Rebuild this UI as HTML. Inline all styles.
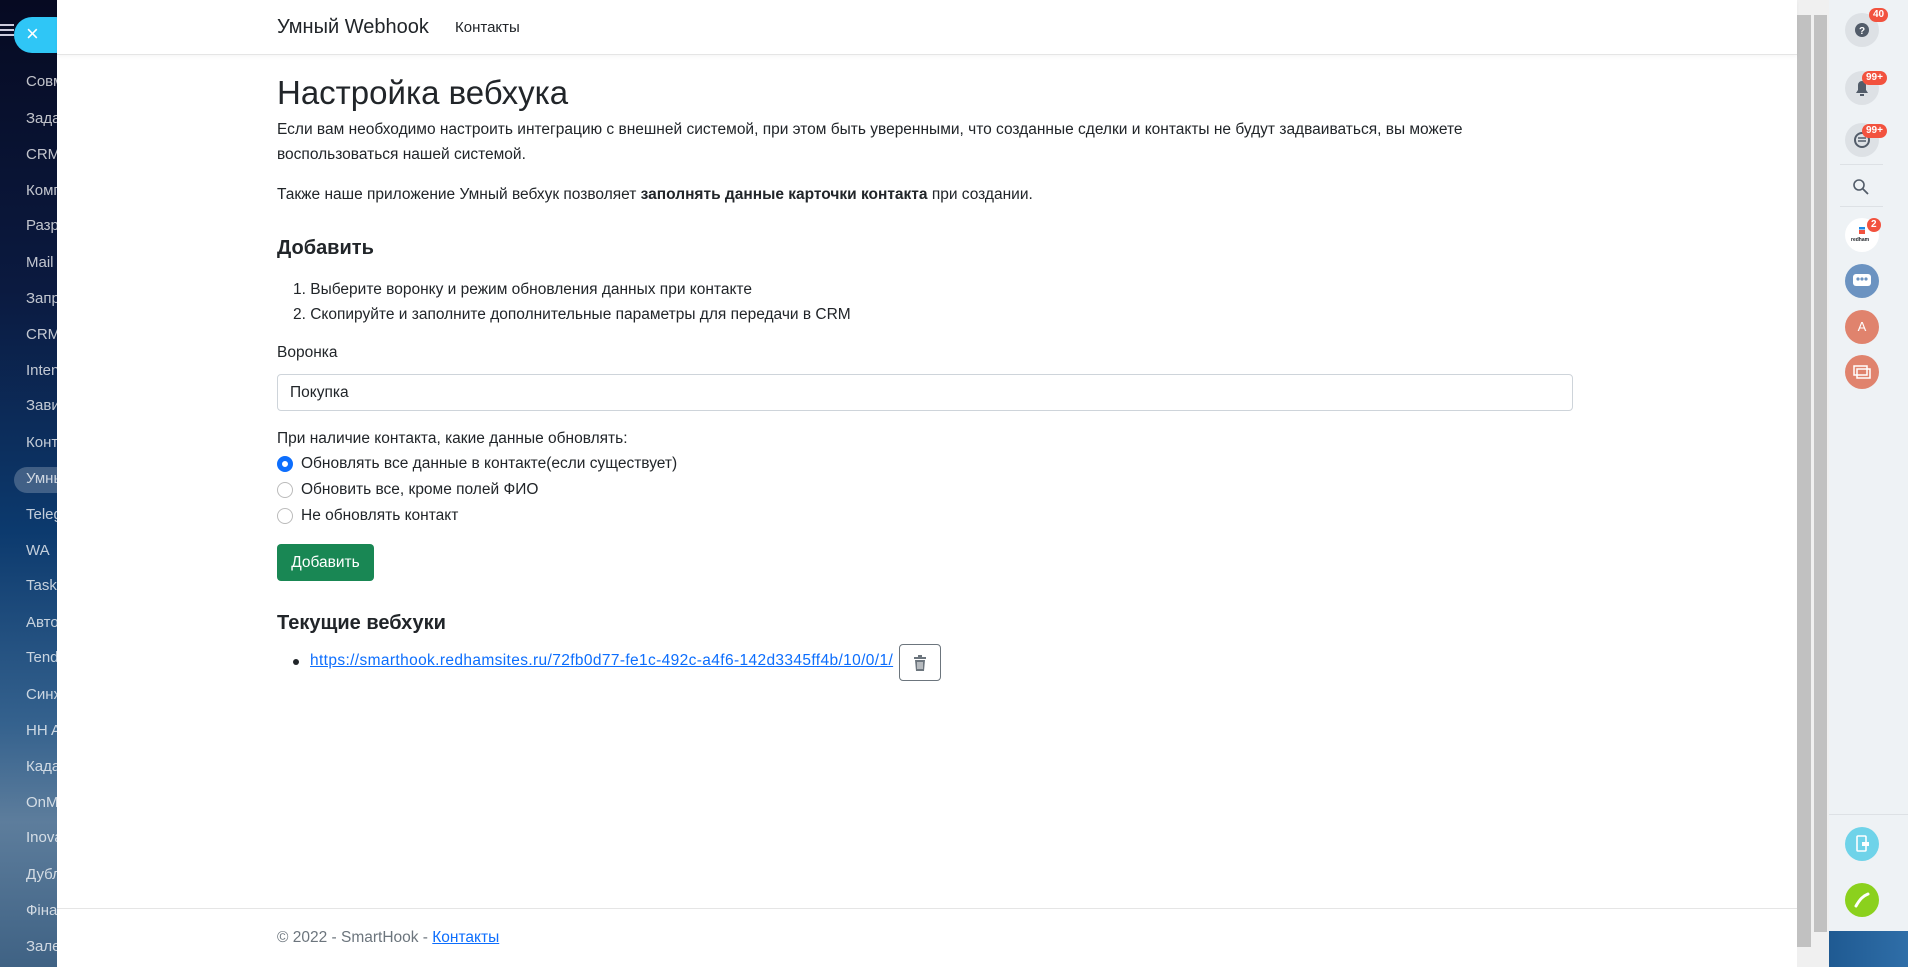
<!DOCTYPE html>
<html><head><meta charset="utf-8"><style>
*{box-sizing:border-box;margin:0;padding:0}
body{width:1908px;height:967px;overflow:hidden;position:relative;font-family:"Liberation Sans",sans-serif;color:#212529;background:#fff}
#lsb{position:absolute;left:0;top:0;width:57px;height:967px;background:linear-gradient(180deg,#060a22 0%,#0b1a40 30%,#0c3a6e 55%,#35628e 75%,#5d7d9c 85%,#3f6284 100%);overflow:hidden}
#lsb .it{position:absolute;left:26px;color:rgba(255,255,255,.75);font-size:15px;white-space:nowrap}
#lsb .hl{position:absolute;left:14px;width:60px;height:26px;border-radius:13px;background:rgba(255,255,255,.22)}
#close{position:absolute;left:14px;top:17px;width:60px;height:36px;border-radius:18px;background:#2fc6f6;z-index:1}
#close span{position:absolute;left:12px;top:4px;color:#fff;font-size:22px}
#ham{position:absolute;left:0;top:24px;width:14px;z-index:2}
#ham i{display:block;height:2px;background:#ccd;margin-bottom:3px}
#main{position:absolute;left:57px;top:0;width:1740px;height:967px;background:#fff;z-index:5}
nav{height:55px;border-bottom:1px solid #e5e5e5;box-shadow:0 2px 4px rgba(0,0,0,.04)}
.brand{position:absolute;left:220px;top:16px;font-size:20px;color:#212529}
.nl{position:absolute;left:398px;top:19px;font-size:15px;color:#212529}
.c{position:absolute;left:220px;width:1296px}
p{font-size:15.5px;line-height:24.5px}
h1{font-size:33px;font-weight:500}
h3{font-size:20px;font-weight:bold}
.radio{display:flex;align-items:center;font-size:15.5px;height:26px}
.radio i{width:16px;height:16px;border-radius:50%;border:1px solid #bbb;margin-right:8px;display:inline-block}
.radio i.on{border:5px solid #0d6efd}
#sb{position:absolute;left:1797px;top:0;width:32px;height:967px;background:#f0f0f0}
#rp{position:absolute;left:1829px;top:0;width:79px;height:967px;background:#eef2f5}
.ic{position:absolute;left:16px;width:34px;height:34px;border-radius:50%;background:#dde1e5}
.bd{position:absolute;background:#f2523e;color:#fff;font-size:10px;font-weight:bold;border-radius:8px;padding:1px 4px;line-height:12px}
</style></head><body>
<div id="lsb">
<div class="hl" style="top:467px"></div>
<div class="it" style="top:73px">Совместная</div><div class="it" style="top:110px">Задачи</div><div class="it" style="top:146px">CRM</div><div class="it" style="top:182px">Компания</div><div class="it" style="top:217px">Разработка</div><div class="it" style="top:254px">Mail</div><div class="it" style="top:290px">Запросы</div><div class="it" style="top:326px">CRM</div><div class="it" style="top:362px">Intent</div><div class="it" style="top:397px">Зависимости</div><div class="it" style="top:434px">Контакты</div><div class="it" style="top:470px">Умный</div><div class="it" style="top:506px">Telegram</div><div class="it" style="top:542px">WA</div><div class="it" style="top:577px">Tasks</div><div class="it" style="top:614px">Авто</div><div class="it" style="top:649px">Tender</div><div class="it" style="top:686px">Синхр</div><div class="it" style="top:722px">HH A</div><div class="it" style="top:758px">Кадастр</div><div class="it" style="top:794px">OnMail</div><div class="it" style="top:829px">Inova</div><div class="it" style="top:866px">Дубли</div><div class="it" style="top:902px">Фінанси</div><div class="it" style="top:938px">Залежн</div>
</div>
<div id="ham"><i></i><i></i><i></i></div>
<div id="close"><span>×</span></div>
<div id="main">
<nav><span class="brand">Умный Webhook</span><span class="nl">Контакты</span></nav>
<h1 class="c" style="top:74px">Настройка вебхука</h1>
<p class="c" style="top:118px">Если вам необходимо настроить интеграцию с внешней системой, при этом быть уверенными, что созданные сделки и контакты не будут задваиваться, вы можете воспользоваться нашей системой.</p>
<p class="c" style="top:183px">Также наше приложение Умный вебхук позволяет <b>заполнять данные карточки контакта</b> при создании.</p>
<h3 class="c" style="top:237px">Добавить</h3>
<p class="c" style="top:278px;padding-left:16px">1. Выберите воронку и режим обновления данных при контакте<br>2. Скопируйте и заполните дополнительные параметры для передачи в CRM</p>
<p class="c" style="top:341px">Воронка</p>
<div class="c" style="top:374px;height:37px;border:1px solid #ced4da;border-radius:4px;padding:9px 12px;font-size:15.5px">Покупка</div>
<p class="c" style="top:427px">При наличие контакта, какие данные обновлять:</p>
<div class="c" style="top:451px">
<div class="radio"><i class="on"></i>Обновлять все данные в контакте(если существует)</div>
<div class="radio"><i></i>Обновить все, кроме полей ФИО</div>
<div class="radio"><i></i>Не обновлять контакт</div></div>
<div style="position:absolute;left:220px;top:544px;width:97px;height:37px;background:#198754;border-radius:4px;color:#fff;font-size:15.5px;line-height:37px;text-align:center">Добавить</div>
<h3 class="c" style="top:612px">Текущие вебхуки</h3>
<div style="position:absolute;left:236px;top:659px;width:6px;height:6px;border-radius:50%;background:#212529"></div>
<a style="position:absolute;left:253px;top:652px;font-size:15.5px;color:#0d6efd;text-decoration:underline;white-space:nowrap;letter-spacing:.37px">https://smarthook.redhamsites.ru/72fb0d77-fe1c-492c-a4f6-142d3345ff4b/10/0/1/</a>
<div style="position:absolute;left:842px;top:644px;width:42px;height:37px;border:1px solid #6c757d;border-radius:4px">
<svg width="14" height="16" viewBox="0 0 14 16" style="position:absolute;left:13px;top:10px"><rect x="1" y="2" width="12" height="2" fill="#6c757d"/><rect x="5" y="0" width="4" height="2" fill="#6c757d"/><path d="M2 5h10l-1 11H3z" fill="#6c757d"/><path d="M5 7v7M7 7v7M9 7v7" stroke="#fff" stroke-width="1"/></svg></div>
<div style="position:absolute;left:0;top:908px;width:1740px;border-top:1px solid #e5e5e5"></div>
<div style="position:absolute;left:220px;top:929px;font-size:15.5px;color:#6c757d">© 2022 - SmartHook - <span style="color:#0d6efd;text-decoration:underline">Контакты</span></div>
</div>
<div id="sb">
<div style="position:absolute;left:0;top:15px;width:14px;height:932px;background:#c1c1c1"></div>
<div style="position:absolute;left:17px;top:15px;width:13px;height:917px;background:#c1c1c1"></div>
</div>
<div id="rp">
<div class="ic" style="top:13px"><svg width="34" height="34"><circle cx="17" cy="17" r="7" fill="#525c69"/><text x="17" y="21" font-size="10" fill="#fff" text-anchor="middle" font-weight="bold" font-family="Liberation Sans">?</text></svg></div>
<div class="bd" style="left:40px;top:8px">40</div>
<div class="ic" style="top:71px"><svg width="34" height="34"><path d="M11 22h12l-2-3v-5a4 4 0 0 0-8 0v5z" fill="#525c69"/><rect x="15" y="23" width="4" height="2" fill="#525c69"/></svg></div>
<div class="bd" style="left:33px;top:71px">99+</div>
<div class="ic" style="top:123px"><svg width="34" height="34"><circle cx="17" cy="17" r="7" fill="none" stroke="#525c69" stroke-width="2"/><path d="M13 15h8M13 18h8" stroke="#525c69" stroke-width="1.5"/></svg></div>
<div class="bd" style="left:33px;top:124px">99+</div>
<div style="position:absolute;left:11px;top:164px;width:43px;border-top:1px solid #dde1e5"></div>
<svg style="position:absolute;left:22px;top:177px" width="20" height="20"><circle cx="8" cy="8" r="5" fill="none" stroke="#525c69" stroke-width="1.6"/><path d="M12 12l5 5" stroke="#525c69" stroke-width="1.8"/></svg>
<div style="position:absolute;left:11px;top:206px;width:43px;border-top:1px solid #dde1e5"></div>
<div class="ic" style="top:218px;background:#fff"><div style="position:absolute;left:14px;top:9px;width:6px;height:7px;background:linear-gradient(#1e88e5 33%,#fff 33%,#fff 45%,#f2523e 45%)"></div><div style="position:absolute;left:6px;top:19px;font-size:5px;font-weight:bold">redham</div></div>
<div class="bd" style="left:38px;top:218px">2</div>
<div class="ic" style="top:264px;background:#6b93c1"><svg width="34" height="34"><rect x="8" y="10" width="18" height="12" rx="3" fill="#fff"/><circle cx="13" cy="15" r="1.6" fill="#6b93c1"/><circle cx="17" cy="15" r="1.6" fill="#6b93c1"/><circle cx="21" cy="15" r="1.6" fill="#6b93c1"/></svg></div>
<div class="ic" style="top:310px;background:#e0836d;color:#fff;text-align:center;line-height:34px;font-size:13px">A</div>
<div class="ic" style="top:355px;background:#e0836d"><svg width="34" height="34"><rect x="9" y="11" width="13" height="9" fill="none" stroke="#fff" stroke-width="1.5"/><rect x="12" y="14" width="13" height="9" fill="none" stroke="#fff" stroke-width="1.5"/></svg></div>
<div style="position:absolute;left:0;top:814px;width:79px;border-top:1px solid #dde1e5"></div>
<div class="ic" style="top:827px;background:#6fd3e9"><svg width="34" height="34"><rect x="12" y="9" width="9" height="15" rx="1" fill="none" stroke="#fff" stroke-width="1.6"/><path d="M17 19h7v-4h-7z" fill="#fff"/></svg></div>
<div class="ic" style="top:883px;background:#8bd11d"><svg width="34" height="34"><path d="M11 23c4-7 7-10 12-12" stroke="#fff" stroke-width="3" fill="none" stroke-linecap="round"/></svg></div>
<div style="position:absolute;left:0;top:931px;width:79px;height:36px;background:linear-gradient(90deg,#1f5a92,#2f6ea8)"></div>
</div>
</body></html>
